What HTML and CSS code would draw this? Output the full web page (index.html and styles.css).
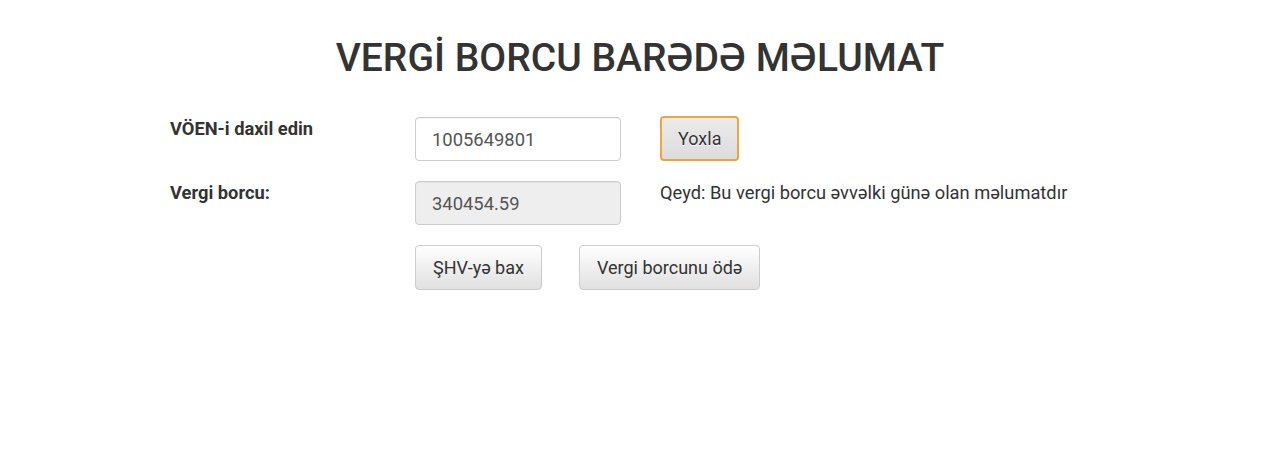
FILE: index.html
```html
<!DOCTYPE html>
<html lang="az">
<head>
  <meta charset="UTF-8" />
  <meta name="viewport" content="width=device-width, initial-scale=1" />
  <title>Vergi borcu barədə məlumat</title>
  <link rel="stylesheet" href="styles.css">
</head>
<body>
  <main class="page">
    <h1 class="title">VERGİ BORCU BARƏDƏ MƏLUMAT</h1>
    <form class="debt-form">
      <label class="field-label" for="voen">VÖEN-i daxil edin</label>
      <input class="field-input" type="text" id="voen" value="1005649801" />
      <div class="field-extra">
        <button type="button" class="btn btn-active">Yoxla</button>
      </div>

      <label class="field-label" for="debt">Vergi borcu:</label>
      <input class="field-input field-readonly" type="text" id="debt" value="340454.59" readonly />
      <div class="field-extra">
        <p class="note">Qeyd: Bu vergi borcu əvvəlki günə olan məlumatdır</p>
      </div>

      <div class="field-label"></div>
      <div class="actions">
        <button type="button" class="btn">ŞHV-yə bax</button>
        <button type="button" class="btn">Vergi borcunu ödə</button>
      </div>
    </form>
  </main>
</body>
</html>
```

FILE: styles.css
```css
body {
  font-family: Roboto, "Liberation Sans", Arial, sans-serif;
  margin: 0;
  background: #fff;
  color: #333;
}
.page {
  width: 928px;
  margin: 0 auto;
  padding-top: 34px;
}
.title {
  font-size: 39px;
  font-weight: 500;
  text-align: center;
  margin: 0 0 35px;
  padding-left: 12px;
  line-height: 48px;
  color: #333;
}
.debt-form {
  display: grid;
  grid-template-columns: 245px 245px auto;
  row-gap: 20px;
}
.field-label {
  font-size: 18.3px;
  font-weight: bold;
  padding-top: 1px;
  line-height: 22px;
}
.field-input {
  box-sizing: border-box;
  width: 206px;
  height: 44px;
  padding: 0 16px;
  font-family: inherit;
  font-size: 18.4px;
  color: #555;
  border: 1px solid #ccc;
  border-radius: 4px;
  background: #fff;
  box-shadow: inset 0 1px 1px rgba(0,0,0,0.04);
}
.field-readonly {
  background: #eee;
}
.field-extra {
  display: flex;
  align-items: flex-start;
}
.note {
  margin: 0;
  font-size: 18.3px;
  line-height: 22px;
  padding-top: 1px;
}
.actions {
  grid-column: 2 / 4;
  display: flex;
  gap: 37px;
}
.btn {
  height: 45px;
  padding: 0 17px;
  font-family: inherit;
  font-size: 18px;
  color: #333;
  border: 1px solid #ccc;
  border-radius: 4px;
  background: linear-gradient(#fff, #e0e0e0);
  cursor: pointer;
}
.btn-active {
  margin-top: -1px;
  border: 2px solid #e9a93a;
  background: linear-gradient(#ebebeb, #dcdcdc);
  text-shadow: 0 1px 0 #fff;
  padding: 0 16px;
}
```
